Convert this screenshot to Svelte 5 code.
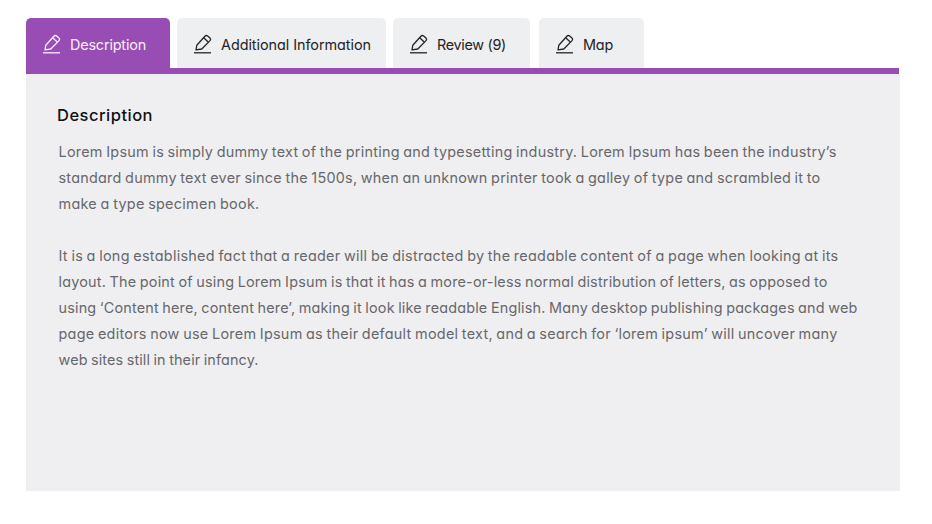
<script>
  const tabs = [
    { label: 'Description', width: 144, gap: 7, text: 76 },
    { label: 'Additional Information', width: 209, gap: 7, text: 150 },
    { label: 'Review (9)', width: 137, gap: 9, text: 69 },
    { label: 'Map', width: 105, gap: 0, text: 30 }
  ];
  let active = $state(0);

  const paragraphs = [
    [
      { text: 'Lorem Ipsum is simply dummy text of the printing and typesetting industry. Lorem Ipsum has been the industry’s', width: 778 },
      { text: 'standard dummy text ever since the 1500s, when an unknown printer took a galley of type and scrambled it to', width: 762 },
      { text: 'make a type specimen book.', width: 201 }
    ],
    [
      { text: 'It is a long established fact that a reader will be distracted by the readable content of a page when looking at its', width: 780 },
      { text: 'layout. The point of using Lorem Ipsum is that it has a more-or-less normal distribution of letters, as opposed to', width: 769 },
      { text: 'using ‘Content here, content here’, making it look like readable English. Many desktop publishing packages and web', width: 799 },
      { text: 'page editors now use Lorem Ipsum as their default model text, and a search for ‘lorem ipsum’ will uncover many', width: 779 },
      { text: 'web sites still in their infancy.', width: 200 }
    ]
  ];

  // Tracks the letters so that a line sets to the given measure.
  function measure(node, width) {
    const natural = node.getBoundingClientRect().width;
    node.style.letterSpacing = `${(width - natural) / node.textContent.length}px`;
  }
</script>

<section class="tabs">
  <div class="tablist" role="tablist">
    {#each tabs as tab, i}
      <button
        class="tab"
        class:active={active === i}
        role="tab"
        aria-selected={active === i}
        style="width: {tab.width}px; margin-right: {tab.gap}px"
        onclick={() => (active = i)}
      >
        <svg class="icon" viewBox="0 0 18 20" aria-hidden="true">
          <path d="M2 15.9 2.8 11.3 10.9 2.2Q12.2.9 13.7 2L15.9 3.9Q17.2 5.2 16 6.6L7.8 15Z" />
          <path d="M9.7 3.8 14.2 7.9" />
          <path d="M0 18.8H17" />
        </svg>
        <span class="label" use:measure={tab.text}>{tab.label}</span>
      </button>
    {/each}
  </div>
  <div class="rule"></div>
  <div class="panel" role="tabpanel">
    <h2><span use:measure={96}>Description</span></h2>
    {#each paragraphs as lines}
      <p>
        {#each lines as line}
          <span class="line"><span use:measure={line.width}>{line.text}</span></span>
        {/each}
      </p>
    {/each}
  </div>
</section>

<style>
  :global(body) {
    background: #fff;
  }
  .tabs {
    box-sizing: border-box;
    width: 932px;
    height: 524px;
    padding: 18px 32px 0 26px;
    font-family: Inter, 'Liberation Sans', sans-serif;
    font-feature-settings: 'cv11' 1;
  }
  .tablist {
    display: flex;
    height: 50px;
  }
  .tab {
    flex: none;
    display: flex;
    align-items: flex-start;
    box-sizing: border-box;
    height: 50px;
    padding: 16px 0 0 17px;
    border: 0;
    border-radius: 5px 5px 0 0;
    background: #eeeff1;
    color: #242426;
    font: 400 14.4px/22px Inter, 'Liberation Sans', sans-serif;
    font-feature-settings: 'cv11' 1;
    cursor: pointer;
  }
  .tab.active {
    background: #984db4;
    color: #fbeffd;
  }
  .icon {
    flex: none;
    width: 18px;
    height: 20px;
    margin-right: 9px;
    fill: none;
    stroke: currentColor;
    stroke-width: 1.3;
    stroke-linejoin: round;
  }
  .label {
    white-space: nowrap;
  }
  .rule {
    width: 873px;
    height: 6px;
    background: #984db4;
  }
  .panel {
    box-sizing: border-box;
    height: 417px;
    padding: 29px 0 0 32px;
    background: #efeff1;
  }
  h2 {
    margin: 0 0 11px -1px;
    color: #111113;
    font-size: 16.5px;
    font-weight: 500;
    line-height: 25px;
    white-space: nowrap;
  }
  p {
    margin: 0 0 26px;
    color: #67676b;
    font-size: 14.4px;
    line-height: 26px;
    word-spacing: -0.8px;
  }
  .line {
    display: block;
    padding-left: 0.5px;
    white-space: nowrap;
  }
</style>
